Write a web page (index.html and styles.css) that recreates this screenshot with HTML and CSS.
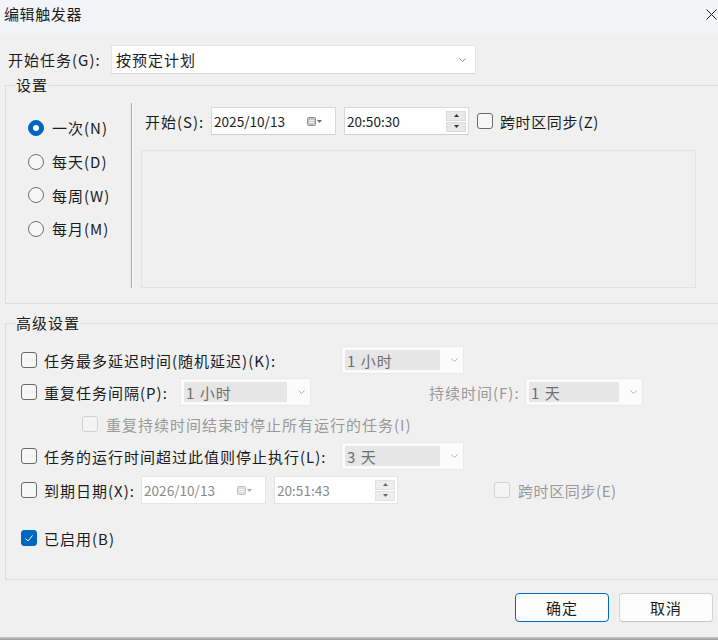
FILE: index.html
```html
<!DOCTYPE html>
<html lang="zh-CN">
<head>
<meta charset="utf-8">
<title>编辑触发器</title>
<link rel="stylesheet" href="styles.css">
</head>
<body>
<div class="window">
  <header class="titlebar">
    <span class="title">编辑触发器</span>
    <svg class="close" width="11" height="11" viewBox="0 0 11 11"><path d="M0.5 0.5 L10.5 10.5 M10.5 0.5 L0.5 10.5" stroke="#1b1b1b" stroke-width="1" fill="none"/></svg>
  </header>

  <main class="content">
    <div class="row-begin">
      <span class="lbl-begin">开始任务(G):</span>
      <div class="combo combo-main">
        <span class="combo-text">按预定计划</span>
        <svg class="chev" width="7" height="4" viewBox="0 0 7 4"><polyline points="0.5,0.5 3.5,3.5 6.5,0.5" fill="none" stroke="#8a8a8a" stroke-width="1"/></svg>
      </div>
    </div>

    <fieldset class="group group-set">
      <legend>设置</legend>
      <div class="set-body">
        <div class="radios">
          <div class="radio-row"><span class="radio on"><span class="dot"></span></span><span>一次(N)</span></div>
          <div class="radio-row"><span class="radio"></span><span>每天(D)</span></div>
          <div class="radio-row"><span class="radio"></span><span>每周(W)</span></div>
          <div class="radio-row"><span class="radio"></span><span>每月(M)</span></div>
        </div>
        <div class="sep"></div>
        <div class="set-right">
          <div class="start-row">
            <span class="lbl-start">开始(S):</span>
            <div class="field date">
              <span class="val">2025/10/13</span>
              <svg class="cal" width="15" height="9" viewBox="0 0 15 9"><rect x="0.5" y="0.5" width="8" height="8" rx="1" fill="#c4c4c4" stroke="#8f8f8f"/><line x1="2" y1="3.5" x2="7" y2="3.5" stroke="#f4f4f4"/><line x1="2" y1="5.5" x2="7" y2="5.5" stroke="#f4f4f4"/><polygon points="10,3 15,3 12.5,6" fill="#6a6a6a"/></svg>
            </div>
            <div class="field time">
              <span class="val">20:50:30</span>
              <div class="spin">
                <span class="sbtn"><svg width="5" height="3" viewBox="0 0 5 3"><polygon points="0,3 5,3 2.5,0" fill="#333"/></svg></span>
                <span class="sbtn"><svg width="5" height="3" viewBox="0 0 5 3"><polygon points="0,0 5,0 2.5,3" fill="#333"/></svg></span>
              </div>
            </div>
            <span class="cb cb-z"></span>
            <span class="cb-label">跨时区同步(Z)</span>
          </div>
          <div class="panel"></div>
        </div>
      </div>
    </fieldset>

    <fieldset class="group group-adv">
      <legend>高级设置</legend>
      <div class="adv-body">
        <div class="arow">
          <span class="cb"></span>
          <span class="albl w-k">任务最多延迟时间(随机延迟)(K):</span>
          <div class="dcombo w123"><span class="sel">1 小时</span><svg class="dchev" width="7" height="4" viewBox="0 0 7 4"><polyline points="0.5,0.5 3.5,3.5 6.5,0.5" fill="none" stroke="#b0b0b0" stroke-width="1"/></svg></div>
        </div>
        <div class="arow">
          <span class="cb"></span>
          <span class="albl w-p">重复任务间隔(P):</span>
          <div class="dcombo w131"><span class="sel">1 小时</span><svg class="dchev" width="7" height="4" viewBox="0 0 7 4"><polyline points="0.5,0.5 3.5,3.5 6.5,0.5" fill="none" stroke="#b0b0b0" stroke-width="1"/></svg></div>
          <span class="albl dis w-f">持续时间(F):</span>
          <div class="dcombo w118"><span class="sel">1 天</span><svg class="dchev" width="7" height="4" viewBox="0 0 7 4"><polyline points="0.5,0.5 3.5,3.5 6.5,0.5" fill="none" stroke="#b0b0b0" stroke-width="1"/></svg></div>
        </div>
        <div class="arow sub">
          <span class="cb dis"></span>
          <span class="albl dis">重复持续时间结束时停止所有运行的任务(I)</span>
        </div>
        <div class="arow">
          <span class="cb"></span>
          <span class="albl w-k">任务的运行时间超过此值则停止执行(L):</span>
          <div class="dcombo w123"><span class="sel">3 天</span><svg class="dchev" width="7" height="4" viewBox="0 0 7 4"><polyline points="0.5,0.5 3.5,3.5 6.5,0.5" fill="none" stroke="#b0b0b0" stroke-width="1"/></svg></div>
        </div>
        <div class="arow row-x">
          <span class="cb"></span>
          <span class="albl w-x">到期日期(X):</span>
          <div class="field date off">
            <span class="val">2026/10/13</span>
            <svg class="cal" width="15" height="9" viewBox="0 0 15 9"><rect x="0.5" y="0.5" width="8" height="8" rx="1" fill="#dedede" stroke="#c2c2c2"/><line x1="2" y1="3.5" x2="7" y2="3.5" stroke="#f6f6f6"/><line x1="2" y1="5.5" x2="7" y2="5.5" stroke="#f6f6f6"/><polygon points="10,3 15,3 12.5,6" fill="#aaaaaa"/></svg>
          </div>
          <div class="field time off w124">
            <span class="val">20:51:43</span>
            <div class="spin">
              <span class="sbtn"><svg width="5" height="3" viewBox="0 0 5 3"><polygon points="0,3 5,3 2.5,0" fill="#666"/></svg></span>
              <span class="sbtn"><svg width="5" height="3" viewBox="0 0 5 3"><polygon points="0,0 5,0 2.5,3" fill="#666"/></svg></span>
            </div>
          </div>
          <span class="cb dis cb-e"></span>
          <span class="albl dis lbl-e">跨时区同步(E)</span>
        </div>
        <div class="arow row-b">
          <span class="cb on"><svg width="14" height="14" viewBox="0 0 14 14"><polyline points="3.5,7.5 6,10 10.5,4.5" fill="none" stroke="#ffffff" stroke-width="1"/></svg></span>
          <span class="albl">已启用(B)</span>
        </div>
      </div>
    </fieldset>

    <div class="buttons">
      <button class="btn primary" type="button">确定</button>
      <button class="btn" type="button">取消</button>
    </div>
  </main>
  <div class="shadow"></div>
</div>
</body>
</html>
```

FILE: styles.css
```css
html, body {
  margin: 0;
  padding: 0;
  overflow: hidden;
}

body {
  width: 718px;
  height: 640px;
  background: #f0f0f0;
  font-family: "Noto Sans CJK SC", "Noto Sans", sans-serif;
  font-size: 15px;
  letter-spacing: 1px;
  color: #1b1b1b;
}

.window {
  width: 718px;
  height: 640px;
  display: flex;
  flex-direction: column;
}

.titlebar {
  height: 33px;
  box-sizing: border-box;
  padding: 0 1px 5px 4px;
  background: #f2f4f8;
  display: flex;
  align-items: center;
  justify-content: space-between;
  flex: none;
}

.title {
  line-height: 20px;
  letter-spacing: 0.6px;
}

.content {
  padding-top: 12px;
  flex: 1;
}

.row-begin {
  display: flex;
  align-items: center;
  height: 29px;
  padding-left: 8px;
}

.lbl-begin {
  width: 103px;
  flex: none;
}

.combo {
  box-sizing: border-box;
  background: #ffffff;
  border: 1px solid #e4e4e4;
  border-bottom-color: #d6d6d6;
  display: flex;
  align-items: center;
}

.combo-main {
  width: 365px;
  height: 29px;
  padding: 0 9px 0 4px;
  justify-content: space-between;
}

/* group boxes */
.group {
  margin: 1px 0 0 5px;
  padding: 0;
  border: 1px solid #dcdcdc;
  width: 730px;
  box-sizing: border-box;
  min-width: 0;
}

.group legend {
  margin-left: 9px;
  padding: 0 1px;
  line-height: 20px;
  height: 20px;
}

.group-adv {
  margin-top: 9px;
}

.set-body {
  display: flex;
  padding: 8px 0 15px 0;
}

.radios {
  width: 125px;
  box-sizing: border-box;
  padding: 8px 0 0 22px;
  display: flex;
  flex-direction: column;
  flex: none;
}

.radio-row {
  height: 33.7px;
  display: flex;
  align-items: center;
  gap: 8px;
}

.radio {
  width: 16px;
  height: 16px;
  box-sizing: border-box;
  border: 1px solid #6f6f6f;
  border-radius: 50%;
  background: #f6f6f6;
  flex: none;
  display: flex;
  align-items: center;
  justify-content: center;
}

.radio.on {
  background: #0067c0;
  border-color: #0067c0;
}

.radio .dot {
  width: 6px;
  height: 6px;
  border-radius: 50%;
  background: #ffffff;
}

.sep {
  width: 1px;
  height: 185px;
  background: #a6a6a6;
  border-right: 1px solid #fafafa;
  flex: none;
}

.set-right {
  padding: 4px 0 0 8px;
  display: flex;
  flex-direction: column;
}

.start-row {
  display: flex;
  align-items: center;
  height: 28px;
  padding-left: 4px;
}

.lbl-start {
  width: 66px;
  flex: none;
}

.field {
  width: 125px;
  height: 28px;
  box-sizing: border-box;
  background: #ffffff;
  border: 1px solid #d9d9d9;
  border-bottom-color: #cfcfcf;
  display: flex;
  align-items: center;
  flex: none;
  font-size: 13.6px;
  letter-spacing: 0;
}

.field .val {
  flex: 1;
}

.date {
  padding: 0 13px 0 2px;
}

.time {
  margin-left: 8px;
  padding: 0 2px 0 2px;
}

.w124 {
  width: 124px;
}

.spin {
  display: flex;
  flex-direction: column;
  gap: 1px;
  width: 20px;
  flex: none;
}

.sbtn {
  height: 10px;
  box-sizing: border-box;
  background: #e8e8e8;
  border: 1px solid #dadada;
  display: flex;
  align-items: center;
  justify-content: center;
}

.field.off {
  color: #8a8a8a;
  border-color: #e4e4e4;
}

.field.off .sbtn {
  background: #ededed;
  border-color: #e2e2e2;
}

.cb {
  width: 16px;
  height: 16px;
  box-sizing: border-box;
  border: 1px solid #6b6b6b;
  border-radius: 3px;
  background: #f6f6f6;
  flex: none;
  display: flex;
  align-items: center;
  justify-content: center;
}

.cb.dis {
  border-color: #d2d2d2;
  background: #f4f4f4;
}

.cb.on {
  background: #0067c0;
  border-color: #0067c0;
}

.cb-z {
  margin-left: 8px;
}

.cb-label {
  margin-left: 7px;
  letter-spacing: 0.6px;
}

.panel {
  margin-top: 15px;
  width: 555px;
  height: 138px;
  box-sizing: border-box;
  border: 1px solid #e2e2e2;
}

/* advanced */
.adv-body {
  padding: 11px 0 25px 15px;
  display: flex;
  flex-direction: column;
}

.arow {
  height: 32px;
  display: flex;
  align-items: center;
}

.arow .albl {
  margin-left: 7px;
  flex: none;
  white-space: nowrap;
}

.albl.dis {
  color: #999999;
}

.w-k { width: 297px; }
.w-p { width: 136px; }
.w-x { width: 97px; }

.albl.w-f {
  margin-left: 118px;
  width: 96px;
}

.arow.sub {
  padding-left: 61px;
}

.arow.sub .albl {
  margin-left: 8px;
}

.row-x {
  margin-top: 2px;
}

.row-x .time {
  margin-left: 8px;
}

.cb-e {
  margin-left: 96px;
}

.arow .lbl-e {
  margin-left: 8px;
  letter-spacing: 0.6px;
}

.row-b {
  margin-top: 16px;
}

.dcombo {
  height: 28px;
  box-sizing: border-box;
  background: #fbfbfb;
  border: 1px solid #e8e8e8;
  padding: 3px 0 3px 3px;
  display: flex;
  align-items: stretch;
  flex: none;
}

.dcombo .sel {
  flex: 1;
  background: #e6e6e6;
  color: #6e6e6e;
  padding-left: 2px;
  display: flex;
  align-items: center;
}

.dcombo .dchev {
  align-self: center;
  margin: 0 5px 0 11px;
  flex: none;
}

.w123 { width: 123px; }
.w131 { width: 131px; }
.w118 { width: 118px; }

/* buttons */
.buttons {
  margin-top: 13px;
  display: flex;
  justify-content: flex-end;
  gap: 10px;
  padding-right: 5px;
}

.btn {
  width: 94px;
  height: 29px;
  box-sizing: border-box;
  background: #fdfdfd;
  border: 1px solid #d3d3d3;
  border-bottom-color: #c4c4c4;
  border-radius: 4px;
  font-family: "Noto Sans CJK SC", "Noto Sans", sans-serif;
  font-size: 15px;
  letter-spacing: 1px;
  color: #1b1b1b;
  padding: 0;
}

.btn.primary {
  border: 1px solid #0067c0;
}

.shadow {
  height: 3px;
  background: linear-gradient(#c9c9c9, #9c9c9c);
  flex: none;
}
```
